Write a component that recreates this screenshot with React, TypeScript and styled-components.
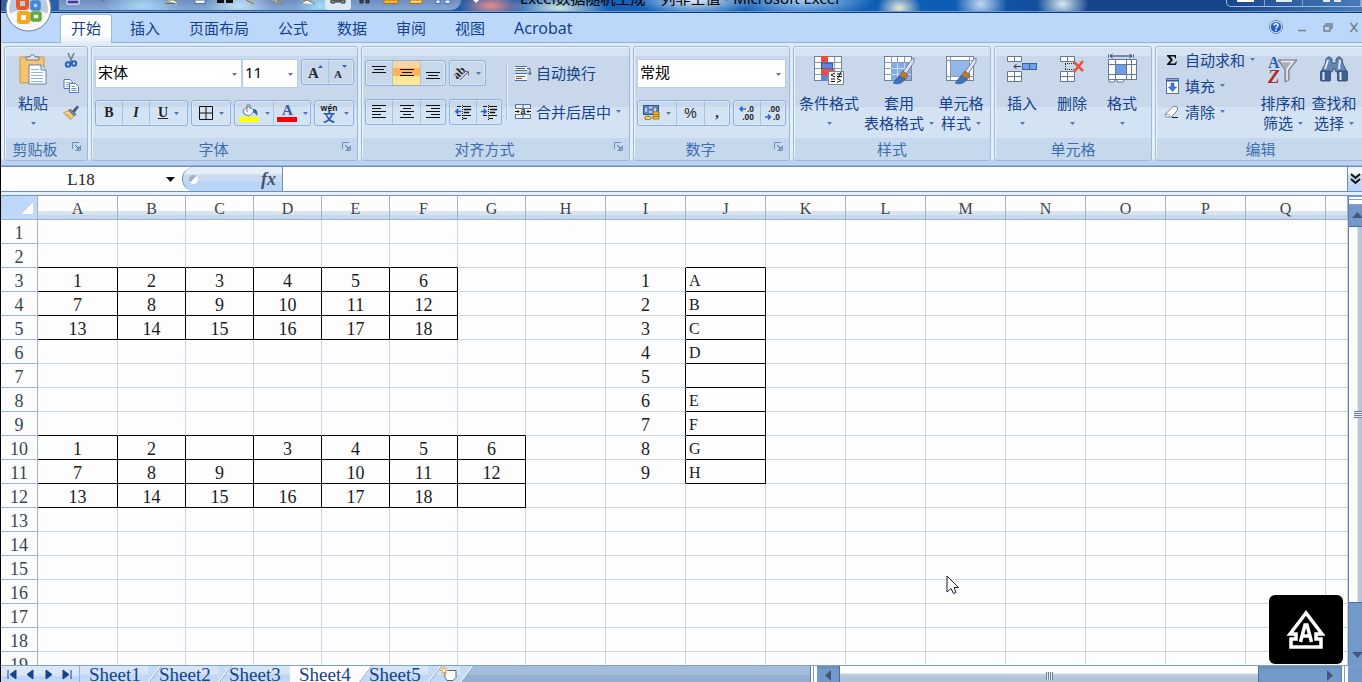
import React from "react";
import styled, { createGlobalStyle, css } from "styled-components";

const ui = `"Noto Sans", "Noto Sans CJK SC", sans-serif`;
const cjk = `"Noto Sans CJK SC", sans-serif`;
const song = `"Liberation Serif", "Noto Sans CJK SC", serif`;

const GlobalStyle = createGlobalStyle`
  *, *::before, *::after { box-sizing: border-box; }
  html, body { margin: 0; height: 100%; overflow: hidden; }
  button, input, select { font: inherit; color: inherit; margin: 0; padding: 0; border: 0; background: none; border-radius: 0; }
  svg { display: block; flex: none; overflow: visible; }
`;

const Window = styled.div`
  position: relative;
  display: flex;
  flex-direction: column;
  height: 100vh;
  overflow: hidden;
  border-left: 1px solid #000;
  background: #bbd8fb;
  color: #15428b;
  font-family: ${ui};
  font-size: 15px;
`;

/* ---------- title bar ---------- */

const TitleBar = styled.header`
  display: flex;
  flex: none;
  align-items: flex-start;
  height: 13px;
  overflow: hidden;
  padding-left: 57px;
  border-bottom: 1px solid #123a73;
  box-shadow: inset 0 -1px 0 #6d9bd1;
  background:
    radial-gradient(ellipse 34px 14px at 36% 6px, #e58f8c, transparent),
    radial-gradient(ellipse 50px 16px at 41% 8px, #cfe3df, transparent),
    radial-gradient(ellipse 60px 16px at 51% 0, #e2ecf2, transparent),
    radial-gradient(ellipse 70px 18px at 59% 0, #a9cdf2, transparent),
    radial-gradient(ellipse 22px 16px at 66% 8px, #ece8d4, transparent),
    radial-gradient(ellipse 26px 20px at 72% 4px, #c3daf4, transparent),
    radial-gradient(ellipse 26px 20px at 78% 4px, #d6e8ef, transparent),
    linear-gradient(90deg, #2d5fa6 0, #0f57ae 35%, #1866bd 50%, #0d5cb5 70%, #16458a 80%, #16458a 90%, #4a7db8 100%);
`;

const QuickBar = styled.div`
  display: flex;
  flex: none;
  width: 404px;
  height: 11px;
  border: solid #3f6498;
  border-width: 0 1px 1px;
  border-radius: 0 0 14px 0;
  background:
    radial-gradient(ellipse 40px 18px at 84px 6px, #a5d8f2, transparent),
    radial-gradient(ellipse 34px 18px at 180px 6px, #bfe0f6, transparent),
    radial-gradient(ellipse 26px 18px at 262px 6px, #9fdcf7, transparent),
    linear-gradient(#6d8ec0, #86a6d2);
`;

const QuickButton = styled.button<{ $w: number; $on?: boolean }>`
  display: flex;
  justify-content: center;
  flex: none;
  width: ${(p) => p.$w}px;
  height: 10px;
  ${(p) => p.$on && css`background: #dbe8f5; border-radius: 0 0 3px 3px;`}
`;

const QuickMore = styled.button`
  width: 28px;
  padding-left: 11px;
`;

const Caption = styled.h1`
  flex: 1;
  margin: -12px 0 0 30px;
  font-size: 15px;
  font-weight: 400;
  line-height: 20px;
  color: #000;
  white-space: nowrap;
`;

const WindowButtons = styled.div`
  display: flex;
  flex: none;
  width: 136px;
  height: 7px;
  border: 1px solid #9dbbdf;
  border-top: 0;
  border-radius: 0 0 0 5px;
`;

const WindowButton = styled.button<{ $grow?: boolean }>`
  display: flex;
  justify-content: center;
  flex: ${(p) => (p.$grow ? "1" : "0 0 38px")};
  border-right: 1px solid #7fa4d0;
`;

const Orb = styled.button`
  position: absolute;
  left: 4px;
  top: -15px;
  width: 47px;
  height: 47px;
`;

/* ---------- tab strip ---------- */

const TabStrip = styled.nav`
  display: flex;
  flex: none;
  gap: 7px;
  height: 30px;
  padding: 1px 0 0 59px;
  border-bottom: 1px solid #8db2e3;
`;

const RibbonTab = styled.button<{ $active?: boolean; $latin?: boolean }>`
  height: 29px;
  padding: 0 10px;
  border: 1px solid transparent;
  border-bottom: 0;
  border-radius: 4px 4px 0 0;
  font-size: ${(p) => (p.$latin ? 16 : 15)}px;
  line-height: 24px;
  padding-bottom: 2px;
  ${(p) =>
    p.$active &&
    css`
      border-color: #9ab9e2;
      background: linear-gradient(#fff 70%, #e3edf8);
    `}
`;

const StripTools = styled.div`
  display: flex;
  align-items: center;
  gap: 10px;
  margin-left: auto;
  padding-bottom: 2px;
`;

const ToolButton = styled.button`
  display: flex;
  justify-content: center;
  width: 16px;
`;

/* ---------- ribbon ---------- */

const Ribbon = styled.div`
  display: flex;
  flex: none;
  gap: 3px;
  height: 123px;
  padding: 3px 0 5px 3px;
  overflow: hidden;
  background: linear-gradient(#dfeaf7, #e8f0fa 95%, #bdd3ef 96%);
  border-bottom: 1px solid #8fb0da;
`;

const GroupBox = styled.section<{ $w?: number }>`
  display: flex;
  flex-direction: column;
  flex: ${(p) => (p.$w ? `0 0 ${p.$w}px` : "1 0 210px")};
  height: 115px;
  border: 1px solid #9bb8df;
  border-radius: 3px;
  box-shadow: inset 1px 1px 0 #eef4fb;
  background: linear-gradient(#d5e3f2 0 9px, #c8d8ea 9px 60px, #d4e3f3 60px 91px, #c6d8eb 91px);
`;

const GroupBody = styled.div<{ $pad?: number }>`
  display: flex;
  height: 91px;
  padding: 0 ${(p) => p.$pad ?? 2}px;
`;

const GroupTitle = styled.h2`
  display: flex;
  justify-content: center;
  position: relative;
  margin: 0;
  color: #3e6db0;
  font-family: ${cjk};
  font-size: 15px;
  font-weight: 400;
  line-height: 22px;
`;

const TitleText = styled.span<{ $shift?: boolean }>`
  padding-right: ${(p) => (p.$shift ? "22px" : "0")};
`;

const Launcher = styled.button`
  position: absolute;
  right: 6px;
  top: 4px;
`;

const Stack = styled.div`
  display: flex;
  flex-direction: column;
  flex: none;
`;

const Rows = styled.div<{ $top: number; $gap: number }>`
  display: flex;
  flex-direction: column;
  gap: ${(p) => p.$gap}px;
  padding: ${(p) => p.$top}px 1px 0;
`;

const Row = styled.div<{ $h: number }>`
  display: flex;
  gap: 3px;
  height: ${(p) => p.$h}px;
`;

const BigButton = styled.button<{ $w: number }>`
  display: flex;
  flex-direction: column;
  align-items: center;
  flex: none;
  width: ${(p) => p.$w}px;
  height: 91px;
  padding-top: 7px;
  font-family: ${cjk};
  line-height: 20px;
  white-space: nowrap;
`;

const BigLabel = styled.span`
  margin-top: 7px;
`;

const BigSecond = styled.span`
  display: flex;
  align-items: center;
  gap: 5px;
  height: 20px;
`;

const IconButton = styled.button`
  display: flex;
  align-items: center;
  justify-content: center;
  width: 26px;
  height: 26px;
`;

const LineButton = styled.button`
  display: flex;
  align-items: center;
  gap: 5px;
  height: 26px;
  padding-bottom: 1px;
  font-family: ${cjk};
  line-height: 20px;
  white-space: nowrap;
`;

const Segment = styled.div`
  display: flex;
  flex: none;
  height: 26px;
  border: 1px solid #8fb0dc;
  border-radius: 3px;
  box-shadow: inset 0 0 0 1px #dbe8f6;
`;

const SegButton = styled.button<{ $w: number; $on?: boolean; $plain?: boolean }>`
  display: flex;
  align-items: center;
  justify-content: center;
  gap: 6px;
  width: ${(p) => p.$w}px;
  font-family: ${(p) => (p.$plain ? `"Liberation Sans", sans-serif` : `"Liberation Serif", serif`)};
  font-size: 14px;
  font-weight: ${(p) => (p.$plain ? 400 : 700)};
  color: #222;
  & + & { border-left: 1px solid #a9c3e5; }
  ${(p) => p.$on && css`background: linear-gradient(#fbd5a0 0 28%, #fdb456 30% 60%, #fee697 64%);`}
`;

const Combo = styled.label<{ $w: number }>`
  position: relative;
  display: flex;
  flex: none;
  width: ${(p) => p.$w}px;
  height: 29px;
  border: 1px solid #b9cde6;
  background: #fff;
`;

const Select = styled.select`
  appearance: none;
  width: 100%;
  padding: 0 0 3px 2px;
  color: #000;
  font-size: 15px;
  line-height: 24px;
`;

const ComboArrow = styled.span`
  position: absolute;
  right: 4px;
  top: 13px;
  pointer-events: none;
`;

const Combos = styled.div`
  display: flex;
`;

const Divider = styled.div`
  width: 1px;
  height: 56px;
  margin: 17px 7px 0 3px;
  background: #a3bde0;
  box-shadow: 1px 0 0 #eef4fb;
`;

/* ---------- formula bar ---------- */

const FormulaBar = styled.div`
  display: flex;
  flex: none;
  height: 26px;
  border: solid #6a90bf;
  border-width: 1px 0;
  background: #fff;
`;

const NameBox = styled.div`
  display: flex;
  align-items: center;
  width: 181px;
`;

const NameInput = styled.input`
  width: 160px;
  padding-top: 2px;
  color: #222;
  font-family: ${song};
  font-size: 17px;
  text-align: center;
`;

const NameArrow = styled.button`
  margin-left: 5px;
`;

const FxPill = styled.button`
  display: flex;
  align-items: center;
  justify-content: space-between;
  width: 101px;
  padding: 0 6px;
  border: solid #6a90bf;
  border-width: 0 1px 0 1px;
  border-radius: 12px 0 0 12px;
  background: linear-gradient(#e6eff9 0 30%, #c9dbee 32% 58%, #b9d5f8 62%);
`;

const Dot = styled.i`
  width: 9px;
  height: 9px;
  border-radius: 50%;
  background: linear-gradient(135deg, #9fb3cb 50%, #fff 50%);
`;

const Fx = styled.span`
  color: #46536a;
  font-family: "Liberation Serif", serif;
  font-size: 18px;
  font-style: italic;
  font-weight: 700;
  line-height: 22px;
`;

const FormulaInput = styled.input`
  flex: 1;
  min-width: 0;
  color: #000;
`;

const ExpandButton = styled.button`
  display: flex;
  align-items: center;
  justify-content: center;
  width: 15px;
  border-left: 1px solid #6a90bf;
  background: linear-gradient(#f0f6fc 0 30%, #c9dbee 34%, #b9d5f8);
`;

const Seam = styled.div`
  flex: none;
  height: 4px;
  border-bottom: 1px solid #6f95c2;
  background: #e6effa;
`;

/* ---------- worksheet ---------- */

const SheetArea = styled.main`
  display: flex;
  flex: 1;
  min-height: 0;
  background: #fdfdfd;
`;

const GridClip = styled.div`
  flex: 1;
  min-width: 0;
  overflow: hidden;
`;

const Grid = styled.table`
  width: 100%;
  table-layout: fixed;
  border-collapse: separate;
  border-spacing: 0;
  color: #1c1c1c;
  font-family: ${song};
  font-size: 18px;
  line-height: 20px;
`;

const Col = styled.col<{ $w?: number }>`
  ${(p) => p.$w && `width: ${p.$w}px;`}
`;

const Th = styled.th`
  height: 24px;
  padding: 3px 0 0;
  border: solid #9ab3d6;
  border-width: 0 1px 1px 0;
  color: #39454f;
  font-weight: 400;
  text-align: center;
`;

const ColHead = styled(Th)`
  background: linear-gradient(#fdfdfd 0 15px, #d8e5f1 15px 19px, #c7d8eb 19px);
  font-size: 16px;
`;

const Corner = styled(Th)`
  padding: 0;
  background: linear-gradient(135deg, #b9d6fa, #c4dbf6);
`;

const CornerMark = styled.i`
  display: block;
  width: 12px;
  height: 11px;
  margin: 1px 4px 0 auto;
  background: linear-gradient(135deg, transparent 50%, #fff 50%);
`;

const Cell = styled.td<{ $right: boolean; $bottom: boolean; $left?: boolean }>`
  height: 24px;
  padding: 3px 0 0 ${(p) => (p.$left ? 3 : 0)}px;
  border-style: solid;
  border-width: 0 1px 1px 0;
  border-right-color: ${(p) => (p.$right ? "#000" : "#cad6e6")};
  border-bottom-color: ${(p) => (p.$bottom ? "#000" : "#cad6e6")};
  text-align: ${(p) => (p.$left ? "left" : "center")};
  ${(p) => p.$left && `font-size: 16px;`}
`;

const VBar = styled.div`
  display: flex;
  flex-direction: column;
  flex: none;
  width: 14px;
  border-left: 1px solid #5f83b5;
  background: #7399c9;
`;

const VSplit = styled.div`
  height: 9px;
  border: solid #7ba0cd;
  border-width: 1px 0 1px;
  background: linear-gradient(#fff 2px, #7ba0cd 2px 3px, #fff 3px);
`;

const VArrow = styled.button<{ $down?: boolean }>`
  display: flex;
  align-items: center;
  justify-content: center;
  height: ${(p) => (p.$down ? 20 : 21)}px;
  padding-left: 4px;
`;

const VThumb = styled.div`
  display: flex;
  align-items: center;
  justify-content: flex-end;
  flex: 9 1 0;
  border: solid #4a6b9c;
  border-width: 1px 0;
  background: linear-gradient(90deg, #fdfdfd 8px, #bccbdd 9px, #b3c4d9);
`;

const VGrip = styled.i`
  width: 8px;
  height: 7px;
  background: repeating-linear-gradient(#6f7f96 0 1px, #e4ebf3 1px 2px);
`;

const Track = styled.div`
  flex: 1 1 0;
`;

/* ---------- sheet tabs ---------- */

const BottomBar = styled.footer`
  display: flex;
  flex: none;
  height: 17px;
  overflow: hidden;
  border-top: 1px solid #7ba2d2;
  background: linear-gradient(#a3bcdc 0 9px, #93aed2 9px);
`;

const NavButtons = styled.div`
  display: flex;
  width: 79px;
  padding: 0 2px;
  border-right: 1px solid #8fb0da;
  background: linear-gradient(#dbe7f5 0 9px, #b9d5f8 11px, #c3d9f2);
`;

const NavButton = styled.button`
  display: flex;
  align-items: center;
  justify-content: center;
  flex: 1;
`;

const SheetTab = styled.button<{ $active?: boolean; $w?: number }>`
  position: relative;
  width: ${(p) => p.$w ?? 70}px;
  height: 16px;
  padding: 0 0 0 9px;
  background: ${(p) => (p.$active ? "#fdfdfd" : "linear-gradient(#d6e4f3 0 8px, #bcd7f9 9px, #c4daf1)")};
  font-family: ${song};
  font-size: 19px;
  line-height: 18px;
  text-align: left;
  white-space: nowrap;
`;

const Slant = styled.svg`
  position: absolute;
  z-index: 1;
  top: 0;
  right: -12px;
`;

const Filler = styled.div`
  flex: 1;
`;

const HBar = styled.div`
  display: flex;
  flex: none;
  width: 538px;
  background: linear-gradient(#6a8fbd 0 2px, #7399c9 3px);
`;

const HSplit = styled.div`
  width: 7px;
  border: solid #5f83b5;
  border-width: 0 0 0 1px;
  background: linear-gradient(90deg, #fff 2px, #7ba0cd 2px 3px, #fff 3px);
`;

const HArrow = styled.button`
  display: flex;
  align-items: center;
  justify-content: center;
  width: 22px;
  height: 18px;
`;

const HThumb = styled.div`
  display: flex;
  align-items: flex-end;
  justify-content: center;
  flex: 7 1 0;
  border: solid #4a6b9c;
  border-width: 0 1px;
  background: linear-gradient(#fdfdfd 7px, #c3d3e4 8px, #b3c4d9 12px);
`;

const HGrip = styled.i`
  width: 7px;
  height: 8px;
  margin-bottom: 2px;
  background: repeating-linear-gradient(90deg, #6f7f96 0 1px, #e4ebf3 1px 2px);
`;

const ScrollCorner = styled.div`
  width: 14px;
  background: #7399c9;
`;

/* ---------- overlays ---------- */

const Pointer = styled.svg`
  position: absolute;
  left: 945px;
  top: 575px;
`;

const InputBadge = styled.div`
  position: absolute;
  right: 19px;
  bottom: 18px;
  display: flex;
  align-items: center;
  justify-content: center;
  width: 74px;
  height: 69px;
  border-radius: 6px;
  background: #000;
`;

/* ---------- icons ---------- */

const Caret = () => (
  <svg width="5" height="3" viewBox="0 0 5 3"><path d="M0 0h5L2.500 3z" fill="#5279b4" /></svg>
);

const PasteIcon = () => (
  <svg width="32" height="32" viewBox="0 0 32 32">
    <rect x="3" y="3" width="24" height="26" rx="1" fill="#f5c46c" stroke="#c79545" />
    <path d="M9 6V3h4c0-3 5-3 5 0h4v3z" fill="#dfe5ec" stroke="#6b7889" />
    <path d="M12 11h12l5 5v14H12z" fill="#fff" stroke="#5f83b8" />
    <path d="M24 11v5h5" fill="#dce8f6" stroke="#5f83b8" />
    <path d="M14 15.500h8M14 18.500h12M14 21.500h12M14 24.500h12M14 27.500h12" stroke="#8fb0dc" />
  </svg>
);
const CutIcon = () => (
  <svg width="14" height="15" viewBox="0 0 14 15" fill="none">
    <path d="M4 0l4 9M10 0L6 9" stroke="#73839b" strokeWidth="1.600" />
    <circle cx="4" cy="11.500" r="2.200" stroke="#2b62b5" strokeWidth="2" />
    <circle cx="10" cy="10.500" r="2.200" stroke="#2b62b5" strokeWidth="2" />
  </svg>
);
const CopyIcon = () => (
  <svg width="16" height="14" viewBox="0 0 16 14" fill="#fff" stroke="#5076b5">
    <path d="M1 .5h6l2 2v7H1z" /><path d="M3 3.500h4M3 5.500h4M3 7.500h3" stroke="#86a8da" />
    <path d="M6.500 4.500h6l3 3v6h-9z" /><path d="M8.500 7.500h3M8.500 9.500h5M8.500 11.500h5" stroke="#5f8bd0" />
  </svg>
);
const BrushIcon = () => (
  <svg width="16" height="15" viewBox="0 0 16 15">
    <path d="M9 6l5-5.500 2 1.500-4.500 6z" fill="#4d5c7c" />
    <path d="M7 4l6 5-1.500 2-6-5z" fill="#7d8aa3" stroke="#44516c" strokeWidth=".7" />
    <path d="M5.500 6l5 5L8 14.500C5 13 2 10 .5 7.500z" fill="#f8dc8c" stroke="#b98b38" strokeWidth=".8" />
    <path d="M3 8.500l5 4" stroke="#b98b38" />
  </svg>
);
const LauncherIcon = () => (
  <svg width="9" height="9" viewBox="0 0 9 9" fill="none" stroke="#6d8ebd">
    <path d="M.5 7V.5H7M3.500 8.500h5v-5" /><path d="M3 3l4 4M7 4.500V7H4.500" stroke="#46689e" />
  </svg>
);
const GrowFont = ({ small }: { small?: boolean }) => (
  <svg width="18" height="18" viewBox="0 0 18 18">
    <text x="2" y="15" fontFamily="Liberation Serif, serif" fontWeight="700" fontSize={small ? 11 : 15} fill="#222b38">A</text>
    <path d={small ? "M10 2h5l-2.500 3z" : "M12 5h5l-2.500-3z"} fill="#3a66b0" />
  </svg>
);
const BorderIcon = () => (
  <svg width="14" height="14" viewBox="0 0 14 14" fill="none" stroke="#111"><path d="M.5.5h13v13H.5zM7 1v12M1 7h12" /></svg>
);
const FillIcon = () => (
  <svg width="20" height="19" viewBox="0 0 20 19">
    <path d="M4 6l6-4 6 5-6 5-5-2z" fill="#eef3fa" stroke="#6c7f9d" /><path d="M8 8V1.500c0-1.500 3-1.500 3 0V5" fill="none" stroke="#6c7f9d" />
    <path d="M14 5c4 0 5 3 4 7-1-2-2-3-4-4z" fill="#2d5fb4" /><rect x="0" y="13" width="20" height="5" rx="1" fill="#ffff00" />
  </svg>
);
const FontColorIcon = () => (
  <svg width="20" height="19" viewBox="0 0 20 19">
    <text x="5" y="11" fontFamily="Liberation Serif, serif" fontWeight="700" fontSize="15" fill="#3b5e98">A</text>
    <rect y="13" width="20" height="5" fill="#f00" />
  </svg>
);
const PhoneticIcon = () => (
  <svg width="18" height="20" viewBox="0 0 18 20">
    <text x="9" y="8" textAnchor="middle" fontFamily="Noto Sans, sans-serif" fontWeight="700" fontSize="8" fill="#222">wén</text>
    <text x="9" y="19" textAnchor="middle" fontFamily="Noto Sans CJK SC, sans-serif" fontSize="12" fill="#2b55b0">文</text>
  </svg>
);

const lineSets: Record<string, string> = {
  top: "M1 2.500h14M3 5.500h10M1 8.500h14",
  middle: "M1 5.500h14M3 8.500h10M1 11.500h14",
  bottom: "M1 8.500h14M3 11.500h10M1 14.500h14",
  left: "M1 2.500h14M1 5.500h9M1 8.500h14M1 11.500h9M1 14.500h14",
  center: "M1 2.500h14M4 5.500h8M1 8.500h14M4 11.500h8M1 14.500h14",
  right: "M1 2.500h14M6 5.500h9M1 8.500h14M6 11.500h9M1 14.500h14",
};
const Lines = ({ kind }: { kind: string }) => (
  <svg width="16" height="18" viewBox="0 0 16 18"><path d={lineSets[kind]} stroke="#111" /></svg>
);
const IndentIcon = ({ more }: { more?: boolean }) => (
  <svg width="17" height="17" viewBox="0 0 17 17">
    <path d="M2 2.500h4M8 2.500h8M9 5.500h7M9 8.500h5M8 11.500h8M2 11.500h4M8 14.500h4" stroke="#111" />
    <path d="M9 5h7v1H9zM9 8h5v1H9z" fill="#111" stroke="#111" strokeWidth=".5" />
    <path d="M7.500 1v15" stroke="#111" strokeDasharray="1 1" />
    <path d={more ? "M0 7h3V4.500L6 7.500l-3 3V8H0z" : "M6 7H3V4.500L0 7.500l3 3V8h3z"} fill="#2f62cc" stroke="#2f62cc" strokeWidth=".6" />
  </svg>
);
const OrientIcon = () => (
  <svg width="16" height="16" viewBox="0 0 16 16">
    <text x="0" y="11" transform="rotate(-45 6 9)" fontFamily="Liberation Serif, serif" fontWeight="700" fontSize="12" fill="#222">ab</text>
    <path d="M6 15l8-8M10.500 6.500H14.500V10.500" fill="none" stroke="#7c5a86" />
  </svg>
);
const WrapIcon = () => (
  <svg width="16" height="16" viewBox="0 0 16 16" fill="none">
    <path d="M0 1h12v4H0zM0 8h12v7H0z" fill="#f3f7fc" /><path d="M0 1.500h12M0 5.500h12M0 8.500h12M0 15.500h12" stroke="#4a6fa8" /><path d="M1 3.500h9M1 11.500h9M1 13.500h6" stroke="#7b5b35" />
    <path d="M12 3.500h3V9M13 7.500l2 2.500 1-2.500" stroke="#44597f" />
  </svg>
);
const MergeIcon = () => (
  <svg width="16" height="15" viewBox="0 0 16 15">
    <path d="M.5.5h15v14H.5z" fill="#e8f1fb" stroke="#54709e" /><path d="M.5 4.500h15M.5 10.500h15M8 1v3M8 11v3" stroke="#54709e" />
    <path d="M0 5h16v5H0z" fill="#fff" /><path d="M0 7.500h4M12 7.500h4M2.500 6L4 7.500 2.500 9M13.500 6L12 7.500 13.500 9" fill="none" stroke="#111" />
    <text x="8" y="10" textAnchor="middle" fontFamily="Liberation Sans, sans-serif" fontWeight="700" fontSize="9" fill="#111">a</text>
  </svg>
);
const MoneyIcon = () => (
  <svg width="17" height="16" viewBox="0 0 17 16">
    <rect x=".5" y=".5" width="15" height="9" fill="#5f86bd" stroke="#2f5590" /><path d="M3 3v4M6 2.500h3M6 7h3M12 3v4" stroke="#d5e3f4" strokeWidth="1.500" />
    <path d="M10 7h6v7h-6z" fill="#f2c14c" stroke="#a77419" /><path d="M10 9.500h6M10 11.500h6" stroke="#a77419" />
    <ellipse cx="5" cy="13" rx="3.500" ry="1.800" fill="#f6cf67" stroke="#a77419" />
  </svg>
);
const DecimalIcon = ({ less }: { less?: boolean }) => (
  <svg width="18" height="17" viewBox="0 0 18 17" fontFamily="Liberation Sans, sans-serif" fontWeight="700" fontSize="8.500" fill="#222">
    <text x="16" y="7" textAnchor="end">{less ? ".00" : ".0"}</text><text x="16" y="15" textAnchor="end">{less ? ".0" : ".00"}</text>
    <path d={less ? "M1 12h5M4 9.500L6.500 12 4 14.500" : "M8 4H2M4.500 1.500L2 4l2.500 2.500"} fill="none" stroke="#2f62cc" strokeWidth="1.500" />
  </svg>
);
const PaintBrush = () => (
  <g>
    <path d="M31 4l-2 1-9 13 3 2 8-12z" fill="#dfe5ee" stroke="#63708a" strokeWidth=".8" />
    <path d="M20 17l5 4-3 5-6-4z" fill="#b77b38" stroke="#7c4f22" strokeWidth=".7" />
    <path d="M16 22l6 3c-2 4-7 6-12 4 3-2 3-5 6-7z" fill="#3f73c0" stroke="#2b5698" strokeWidth=".7" />
  </g>
);
const TableBase = () => (
  <g><rect x="1.500" y="2.500" width="27" height="24" fill="#fff" stroke="#6f82a0" /><path d="M1.500 8.500h27M1.500 14.500h27M1.500 20.500h27M8.500 3v23M14.500 3v23M21.500 3v23" stroke="#8398bb" /></g>
);
const CondIcon = () => (
  <svg width="32" height="32" viewBox="0 0 32 32">
    <TableBase />
    <rect x="8" y="2" width="7" height="6" fill="#f04a38" /><rect x="8.500" y="9" width="11" height="6" fill="#5c86dd" stroke="#2c4f9e" />
    <rect x="8" y="15" width="13" height="6" fill="#f04a38" /><rect x="8" y="21" width="6" height="6" fill="#5c86dd" />
    <rect x="15.500" y="17.500" width="15" height="13" fill="#fff" stroke="#7b8798" />
    <path d="M22 19l-4 2 4 2M18 25h4M18 27.500h4M24 20h5M24 22.500h5M28 18l-3 6M24 24.500l4 2-4 2" fill="none" stroke="#111" />
  </svg>
);
const FormatTableIcon = () => (
  <svg width="32" height="32" viewBox="0 0 32 32"><TableBase /><rect x="8" y="9" width="20" height="17" fill="#86aae2" /><path d="M8 14.500h20M8 20.500h20M14.500 9v17M21.500 9v17" stroke="#c9daf4" /><PaintBrush /></svg>
);
const CellStyleIcon = () => (
  <svg width="32" height="32" viewBox="0 0 32 32"><rect x="1.500" y="2.500" width="27" height="24" fill="#fff" stroke="#6f82a0" /><path d="M1.500 6.500h27M1.500 22.500h27M5.500 3v23M24.500 3v23" stroke="#8398bb" /><rect x="6" y="7" width="18" height="15" fill="#93b5e8" /><PaintBrush /></svg>
);
const InsertIcon = () => (
  <svg width="32" height="32" viewBox="0 0 32 32" fill="#fff" stroke="#63779a">
    <path d="M1.500 2.500h14v5h-14zM8.500 3v4M1.500 17.500h14v10h-14zM1.500 22.500h14M8.500 18v9" />
    <rect x="16.500" y="9.500" width="14" height="6" fill="#6fa0e8" stroke="#3d62a0" /><path d="M23.500 10v5" stroke="#3d62a0" />
    <path d="M15 12.500H8M10.500 10L8 12.500l2.500 2.500" fill="none" stroke="#26314a" />
  </svg>
);
const DeleteIcon = () => (
  <svg width="32" height="32" viewBox="0 0 32 32" fill="#fff" stroke="#63779a">
    <path d="M4.500 2.500h14v5h-14zM11.500 3v4M4.500 17.500h14v10h-14zM4.500 22.500h14M11.500 18v9" />
    <path d="M9 9.500h10M9 15.500h10M9.500 10v5" fill="none" stroke="#333" strokeDasharray="1 1" />
    <path d="M18 8l9 9M27 7l-9 11" stroke="#e8503a" strokeWidth="2.500" />
  </svg>
);
const FormatIcon = () => (
  <svg width="32" height="32" viewBox="0 0 32 32" fill="#fff" stroke="#63779a">
    <path d="M2.500 5.500h28v20h-28zM2.500 10.500h28M2.500 20.500h28M9.500 6v20M20.500 6v20M25.500 6v20M3 26v2h5l1-2M11 26v2h6l1-2" />
    <rect x="10" y="11" width="10" height="9" fill="#6f9de8" stroke="none" />
    <path d="M2.500 0v4M27.500 0v4" /><path d="M4 2h22M6.500 0L4 2l2.500 2M23.500 0L26 2l-2.500 2" fill="none" stroke="#26314a" />
  </svg>
);
const SigmaIcon = () => (
  <svg width="16" height="14" viewBox="0 0 16 14"><path d="M3 2h9v3.500h-1c0-1.500-.5-2-2-2H6.500L9 7l-3 3.500h3.500c1.500 0 2-.5 2.500-2h1L12 12H3v-1l3.500-4L3 3z" fill="#111" /></svg>
);
const DownFillIcon = () => (
  <svg width="16" height="16" viewBox="0 0 16 16">
    <rect x="2.500" y=".5" width="12" height="15" fill="#fff" stroke="#56749f" /><path d="M2.500 2.500h12" stroke="#2d55a0" strokeWidth="2" />
    <path d="M7 5h3v4h2.500L8.500 13.500 4.500 9H7z" fill="#3b7be0" stroke="#2354a8" strokeWidth=".6" />
  </svg>
);
const EraserIcon = () => (
  <svg width="16" height="14" viewBox="0 0 16 14"><path d="M1.500 9l7-7c1-1 5-1 5 1v2l-6 7h-4c-2 0-3-1-2-3z" fill="#fff" stroke="#6c7c94" /><path d="M1.500 9l4 1 2 2" fill="none" stroke="#9aa7ba" /><path d="M8 12.500h6" stroke="#111" /></svg>
);
const SortIcon = () => (
  <svg width="32" height="32" viewBox="0 0 32 32">
    <path d="M11 6h19l-8 10v10l-4 2V16z" fill="#a9afb7" stroke="#6d757f" /><path d="M14 7.500h12l-6 8v11" fill="none" stroke="#eef1f4" strokeWidth="1.500" />
    <text x="1" y="14" fontFamily="Liberation Serif, serif" fontWeight="700" fontSize="16" fill="#2e5fa8">A</text>
    <text x="1" y="29" fontFamily="Liberation Serif, serif" fontWeight="700" fontStyle="italic" fontSize="19" fill="#a8322a">Z</text>
  </svg>
);
const FindIcon = () => (
  <svg width="32" height="32" viewBox="0 0 32 32" stroke="#2c4670" strokeWidth=".8">
    <path d="M8 5l2-2h2l2 2v4h4V5l2-2h2l2 2 1 5 4 8H18l-2-4-2 4H3l4-8z" fill="#6585b5" />
    <rect x="2.500" y="17" width="10" height="10" rx="1" fill="#3e5f92" /><rect x="19.500" y="17" width="10" height="10" rx="1" fill="#3e5f92" />
    <path d="M5.500 18v8M22.500 18v8M10 6l-3 9M22 6l-1 9" stroke="#dfe9f6" strokeWidth="2" />
  </svg>
);
const OfficeLogo = () => (
  <svg width="47" height="47" viewBox="0 0 47 47" fill="none">
    <circle cx="23.500" cy="23.500" r="22.500" fill="#e6ebf2" stroke="#74859f" /><circle cx="23.500" cy="23.500" r="20.500" fill="#bccbdf" stroke="#fff" strokeWidth="2" />
    <path d="M4 29a20 20 0 0 0 39 0c-10-6-29-6-39 0z" fill="#fff" opacity=".85" />
    <rect x="13" y="14" width="9" height="9" rx="2" stroke="#e85a24" strokeWidth="4" />
    <rect x="27" y="17" width="7" height="7" rx="1" stroke="#3f86d8" strokeWidth="3.500" />
    <rect x="14" y="28" width="9" height="9" rx="1" stroke="#f5a81c" strokeWidth="4" />
    <rect x="27" y="28" width="8" height="7" rx="1" stroke="#62a83a" strokeWidth="3.500" />
  </svg>
);
const HelpIcon = () => (
  <svg width="14" height="14" viewBox="0 0 14 14"><circle cx="7" cy="7" r="6.500" fill="#fff" stroke="#5e7ea9" /><circle cx="7" cy="7" r="5.300" fill="#2560d0" /><path d="M5 5.500c0-2.500 4-2.500 4 0 0 1.500-2 1.500-2 3M7 9.500v1.500" fill="none" stroke="#fff" strokeWidth="1.500" /></svg>
);
const Glyph = ({ d }: { d: string }) => (
  <svg width="10" height="9" viewBox="0 0 10 9"><path d={d} fill="none" stroke="#76808e" strokeWidth="1.500" /></svg>
);
const Triangle = ({ dir }: { dir: "up" | "down" | "left" | "right" }) => {
  const paths = { up: "M0 8h11L5.500 2z", down: "M0 2h11L5.500 8z", left: "M8 0v11L2 5.500z", right: "M2 0v11l6-5.500z" };
  return <svg width="11" height="11" viewBox="0 0 11 11"><path d={paths[dir]} fill="#46577a" /></svg>;
};
const QuickGlyph = ({ a, b, d }: { a: string; b: string; d: string }) => (
  <svg width="16" height="5" viewBox="0 0 16 5"><path d={d} fill={a} stroke={b} /></svg>
);

/* ---------- composed parts ---------- */

type GroupProps = { title: string; w?: number; pad?: number; launcher?: boolean; children: React.ReactNode };
const Group = ({ title, w, pad, launcher, children }: GroupProps) => (
  <GroupBox $w={w} aria-label={title}>
    <GroupBody $pad={pad}>{children}</GroupBody>
    <GroupTitle>
      <TitleText $shift={launcher}>{title}</TitleText>
      {launcher && <Launcher aria-label={`${title}设置`}><LauncherIcon /></Launcher>}
    </GroupTitle>
  </GroupBox>
);

const Big = ({ icon, label, second, w = 50 }: { icon: React.ReactNode; label: string; second?: string; w?: number }) => (
  <BigButton $w={w}>
    {icon}
    <BigLabel>{label}</BigLabel>
    <BigSecond>{second}<Caret /></BigSecond>
  </BigButton>
);

const Picker = ({ w, value, label }: { w: number; value: string; label: string }) => (
  <Combo $w={w}>
    <Select aria-label={label} defaultValue={value}><option>{value}</option></Select>
    <ComboArrow><Caret /></ComboArrow>
  </Combo>
);

/* ---------- data ---------- */

const tabs = ["开始", "插入", "页面布局", "公式", "数据", "审阅", "视图", "Acrobat"];
const columns = "ABCDEFGHIJKLMNOPQ".split("");
const colWidth = (c: string) => ("BCDEFG".includes(c) ? 68 : 80);
const rowCount = 19;

const cells: Record<number, Record<string, string>> = {
  3: { A: "1", B: "2", C: "3", D: "4", E: "5", F: "6", I: "1", J: "A" },
  4: { A: "7", B: "8", C: "9", D: "10", E: "11", F: "12", I: "2", J: "B" },
  5: { A: "13", B: "14", C: "15", D: "16", E: "17", F: "18", I: "3", J: "C" },
  6: { I: "4", J: "D" },
  7: { I: "5" },
  8: { I: "6", J: "E" },
  9: { I: "7", J: "F" },
  10: { A: "1", B: "2", D: "3", E: "4", F: "5", G: "6", I: "8", J: "G" },
  11: { A: "7", B: "8", C: "9", E: "10", F: "11", G: "12", I: "9", J: "H" },
  12: { A: "13", B: "14", C: "15", D: "16", E: "17", F: "18" },
};

const boxed = (col: number, row: number) =>
  (row >= 3 && row <= 5 && col >= 0 && col <= 5) ||
  (row >= 10 && row <= 12 && col >= 0 && col <= 6) ||
  (row >= 3 && row <= 11 && col === 9);

const quickItems = [
  { w: 28, a: "#3b3f9e", b: "#fff", d: "M2 0h12v4H2z" },
  { w: 32, a: "none", b: "#2f62cc", d: "M8 0l-1 2" },
  { w: 38, a: "none", b: "none", d: "" },
  { w: 30, a: "#fff", b: "#8a6a3a", d: "M1 0h9l5 4M1 3.500h10" },
  { w: 26, a: "#fff", b: "#4a6fa8", d: "M3 0h10v3.500H3z" },
  { w: 24, a: "#111", b: "none", d: "M0 0h7v3H0zM9 0h7v3H9z" },
  { w: 26, a: "none", b: "#a4602a", d: "M4 0l8 4" },
  { w: 28, a: "#f4e3b8", b: "#8a6a3a", d: "M0 0h9v3h6" },
  { w: 34, a: "#fff", b: "#8a6a3a", d: "M1 3l6-3 8 4" },
];
const quickTail = [
  { w: 28, a: "#44546e", b: "#222", d: "M3 0h3v3H3zM9 0h3v3H9z" },
  { w: 24, a: "#f3b63a", b: "#a77419", d: "M1 0h14v3.500H1z" },
  { w: 26, a: "#f9d06a", b: "#a77419", d: "M2 0h13l-2 3.500H2z" },
  { w: 28, a: "#fff", b: "#3b74c4", d: "M1 0h4v3.500H1zM10 0h5v3.500h-5z" },
];

const navIcons = ["M1 0v9M9 0v9L3 4.500z", "M7 0v9L1 4.500z", "M2 0v9l6-4.500z", "M0 0v9l6-4.500zM8 0v9"];
const sheets = ["Sheet1", "Sheet2", "Sheet3", "Sheet4", "Sheet5"];

const TabSlant = ({ active, last }: { active?: boolean; last?: boolean }) => (
  <Slant width="14" height="16" viewBox="0 0 14 16">
    {!last && <path d="M0 0h14L2 16H0z" fill={active ? "#fdfdfd" : "#c6dbf4"} />}
    {last && <path d="M0 0h14L2 16H0z" fill="#c6dbf4" />}
    <path d="M13.500 0L1.500 16" stroke="#7ba0cd" fill="none" /><path d="M12.500 0L.5 16" stroke="#fff" fill="none" />
  </Slant>
);

export default function App() {
  return (
    <Window>
      <GlobalStyle />
      <TitleBar>
        <QuickBar>
          {quickItems.map((q, i) => <QuickButton key={i} $w={q.w} aria-label="快速访问"><QuickGlyph {...q} /></QuickButton>)}
          <QuickButton $w={26} $on aria-label="查找"><QuickGlyph a="#8a97a8" b="#333" d="M1 0h4v3H1zM6 0h4v2H6zM11 0h4v3h-4z" /></QuickButton>
          {quickTail.map((q, i) => <QuickButton key={i} $w={q.w} aria-label="快速访问"><QuickGlyph {...q} /></QuickButton>)}
        </QuickBar>
        <QuickMore aria-label="自定义"><svg width="6" height="3" viewBox="0 0 6 3"><path d="M0 0h6L3 3z" fill="#fff" /></svg></QuickMore>
        <Caption>Excel数据随机生成一列非空值 - Microsoft Excel</Caption>
        <WindowButtons>
          <WindowButton aria-label="最小化"><svg width="17" height="2"><rect width="17" height="2" fill="#fff" /></svg></WindowButton>
          <WindowButton aria-label="还原"><svg width="16" height="2"><rect width="16" height="2" fill="#e3e8ee" /></svg></WindowButton>
          <WindowButton $grow aria-label="关闭"><svg width="18" height="2"><path d="M0 0h7v2H0zM11 0h7v2h-7z" fill="#e3e8ee" /></svg></WindowButton>
        </WindowButtons>
      </TitleBar>

      <TabStrip>
        {tabs.map((t, i) => <RibbonTab key={t} $active={i === 0} $latin={t === "Acrobat"}>{t}</RibbonTab>)}
        <StripTools>
          <ToolButton aria-label="帮助"><HelpIcon /></ToolButton>
          <ToolButton aria-label="最小化工作簿"><Glyph d="M1 7.500h8" /></ToolButton>
          <ToolButton aria-label="还原工作簿"><Glyph d="M3 3V1h6v4H7M1 3h6v5H1z" /></ToolButton>
          <ToolButton aria-label="关闭工作簿"><Glyph d="M1.500 0l7 9M8.500 0l-7 9" /></ToolButton>
        </StripTools>
      </TabStrip>
      <Orb aria-label="Office 按钮"><OfficeLogo /></Orb>

      <Ribbon>
        <Group title="剪贴板" w={84} pad={3} launcher>
          <Big icon={<PasteIcon />} label="粘贴" />
          <Stack>
            <IconButton aria-label="剪切"><CutIcon /></IconButton>
            <IconButton aria-label="复制"><CopyIcon /></IconButton>
            <IconButton aria-label="格式刷"><BrushIcon /></IconButton>
          </Stack>
        </Group>

        <Group title="字体" w={267} launcher>
          <Rows $top={12} $gap={12}>
            <Row $h={29}>
              <Combos>
                <Picker w={147} value="宋体" label="字体" />
                <Picker w={56} value="11" label="字号" />
              </Combos>
              <Segment>
                <SegButton $w={26} aria-label="增大字号"><GrowFont /></SegButton>
                <SegButton $w={25} aria-label="减小字号"><GrowFont small /></SegButton>
              </Segment>
            </Row>
            <Row $h={26}>
              <Segment>
                <SegButton $w={26}>B</SegButton>
                <SegButton $w={27}><i>I</i></SegButton>
                <SegButton $w={38}><u>U</u><Caret /></SegButton>
              </Segment>
              <Segment><SegButton $w={38} aria-label="边框"><BorderIcon /><Caret /></SegButton></Segment>
              <Segment>
                <SegButton $w={38} aria-label="填充颜色"><FillIcon /><Caret /></SegButton>
                <SegButton $w={37} aria-label="字体颜色"><FontColorIcon /><Caret /></SegButton>
              </Segment>
              <Segment><SegButton $w={38} aria-label="拼音"><PhoneticIcon /><Caret /></SegButton></Segment>
            </Row>
          </Rows>
        </Group>

        <Group title="对齐方式" w={269} launcher>
          <Rows $top={13} $gap={13}>
            <Row $h={26}>
              <Segment>
                <SegButton $w={26} aria-label="顶端对齐"><Lines kind="top" /></SegButton>
                <SegButton $w={28} $on aria-label="垂直居中"><Lines kind="middle" /></SegButton>
                <SegButton $w={25} aria-label="底端对齐"><Lines kind="bottom" /></SegButton>
              </Segment>
              <Segment><SegButton $w={35} aria-label="方向"><OrientIcon /><Caret /></SegButton></Segment>
            </Row>
            <Row $h={26}>
              <Segment>
                <SegButton $w={26} aria-label="左对齐"><Lines kind="left" /></SegButton>
                <SegButton $w={28} aria-label="居中"><Lines kind="center" /></SegButton>
                <SegButton $w={25} aria-label="右对齐"><Lines kind="right" /></SegButton>
              </Segment>
              <Segment>
                <SegButton $w={26} aria-label="减少缩进量"><IndentIcon /></SegButton>
                <SegButton $w={25} aria-label="增加缩进量"><IndentIcon more /></SegButton>
              </Segment>
            </Row>
          </Rows>
          <Divider />
          <Rows $top={13} $gap={13}>
            <LineButton><WrapIcon />自动换行</LineButton>
            <LineButton><MergeIcon />合并后居中<Caret /></LineButton>
          </Rows>
        </Group>

        <Group title="数字" w={157} launcher>
          <Rows $top={12} $gap={12}>
            <Row $h={29}><Picker w={149} value="常规" label="数字格式" /></Row>
            <Row $h={26}>
              <Segment>
                <SegButton $w={38} aria-label="会计数字格式"><MoneyIcon /><Caret /></SegButton>
                <SegButton $w={28} $plain>%</SegButton>
                <SegButton $w={25}>,</SegButton>
              </Segment>
              <Segment>
                <SegButton $w={26} aria-label="增加小数位数"><DecimalIcon /></SegButton>
                <SegButton $w={25} aria-label="减少小数位数"><DecimalIcon less /></SegButton>
              </Segment>
            </Row>
          </Rows>
        </Group>

        <Group title="样式" w={198}>
          <Big icon={<CondIcon />} label="条件格式" w={66} />
          <Big icon={<FormatTableIcon />} label="套用" second="表格格式" w={74} />
          <Big icon={<CellStyleIcon />} label="单元格" second="样式" />
        </Group>

        <Group title="单元格" w={158}>
          <Big icon={<InsertIcon />} label="插入" />
          <Big icon={<DeleteIcon />} label="删除" />
          <Big icon={<FormatIcon />} label="格式" />
        </Group>

        <Group title="编辑" pad={8}>
          <Stack>
            <LineButton><SigmaIcon />自动求和<Caret /></LineButton>
            <LineButton><DownFillIcon />填充<Caret /></LineButton>
            <LineButton><EraserIcon />清除<Caret /></LineButton>
          </Stack>
          <Big icon={<SortIcon />} label="排序和" second="筛选" w={56} />
          <Big icon={<FindIcon />} label="查找和" second="选择" w={46} />
        </Group>
      </Ribbon>

      <FormulaBar>
        <NameBox>
          <NameInput aria-label="名称框" defaultValue="L18" />
          <NameArrow aria-label="名称列表"><svg width="9" height="5" viewBox="0 0 9 5"><path d="M0 0h9L4.500 5z" fill="#111" /></svg></NameArrow>
        </NameBox>
        <FxPill><Dot /><Fx>fx</Fx></FxPill>
        <FormulaInput aria-label="编辑栏" />
        <ExpandButton aria-label="展开编辑栏">
          <svg width="11" height="12" viewBox="0 0 11 12"><path d="M1 1l4.500 4L10 1M1 6l4.500 4L10 6" fill="none" stroke="#111" strokeWidth="2" /></svg>
        </ExpandButton>
      </FormulaBar>
      <Seam />

      <SheetArea>
        <GridClip>
          <Grid>
            <colgroup>
              <Col $w={37} />
              {columns.map((c) => <Col key={c} $w={colWidth(c)} />)}
              <Col />
            </colgroup>
            <thead>
              <tr>
                <Corner><CornerMark /></Corner>
                {columns.map((c) => <ColHead key={c} scope="col">{c}</ColHead>)}
                <ColHead />
              </tr>
            </thead>
            <tbody>
              {Array.from({ length: rowCount }, (_, i) => i + 1).map((r) => (
                <tr key={r}>
                  <Th scope="row">{r}</Th>
                  {[...columns, ""].map((c, x) => (
                    <Cell
                      key={x}
                      $left={c === "J"}
                      $right={boxed(x, r) || boxed(x + 1, r)}
                      $bottom={boxed(x, r) || boxed(x, r + 1)}
                    >
                      {cells[r]?.[c]}
                    </Cell>
                  ))}
                </tr>
              ))}
            </tbody>
          </Grid>
        </GridClip>
        <VBar>
          <VSplit />
          <VArrow aria-label="向上滚动"><Triangle dir="up" /></VArrow>
          <VThumb><VGrip /></VThumb>
          <Track />
          <VArrow $down aria-label="向下滚动"><Triangle dir="down" /></VArrow>
        </VBar>
      </SheetArea>

      <BottomBar>
        <NavButtons>
          {navIcons.map((d, i) => (
            <NavButton key={i} aria-label={`工作表导航 ${i + 1}`}>
              <svg width="10" height="9" viewBox="0 0 10 9"><path d={d} fill="#15428b" stroke="#15428b" strokeWidth="1" /></svg>
            </NavButton>
          ))}
        </NavButtons>
        {sheets.map((s) => (
          <SheetTab key={s} $active={s === "Sheet4"}>
            {s}
            {s !== "Sheet3" && <TabSlant active={s === "Sheet4"} />}
          </SheetTab>
        ))}
        <SheetTab $w={32} aria-label="插入工作表">
          <svg width="20" height="16" viewBox="0 0 20 16">
            <path d="M6 4.500h11v7l-3 3H8l-2-3z" fill="#fff" stroke="#56657d" />
            <path d="M5 0v9M.5 4.500h9M2 1.500l6 6M8 1.500l-6 6" stroke="#e8962a" /><circle cx="5" cy="4.500" r="1.500" fill="#fff3c4" />
          </svg>
          <TabSlant last />
        </SheetTab>
        <Filler />
        <HBar>
          <HSplit />
          <HArrow aria-label="向左滚动"><Triangle dir="left" /></HArrow>
          <HThumb><HGrip /></HThumb>
          <Track />
          <HArrow aria-label="向右滚动"><Triangle dir="right" /></HArrow>
          <HSplit />
        </HBar>
        <ScrollCorner />
      </BottomBar>

      <Pointer width="13" height="20" viewBox="0 0 13 20"><path d="M1 1v16l4-3.500 2.500 5 2.500-1-2-5h4.500z" fill="#fff" stroke="#1b1b45" /></Pointer>
      <InputBadge>
        <svg width="40" height="40" viewBox="0 0 40 40" fill="none" stroke="#fff" strokeWidth="3.500">
          <path d="M20 3L4 24h6v5H5v8h30v-8h-5v-5h6z" /><path d="M14.500 32L19 15h2l4.500 17M16 26h8" strokeWidth="3.500" /><path d="M8 34h24" stroke="#000" strokeWidth="1" />
        </svg>
      </InputBadge>
    </Window>
  );
}
